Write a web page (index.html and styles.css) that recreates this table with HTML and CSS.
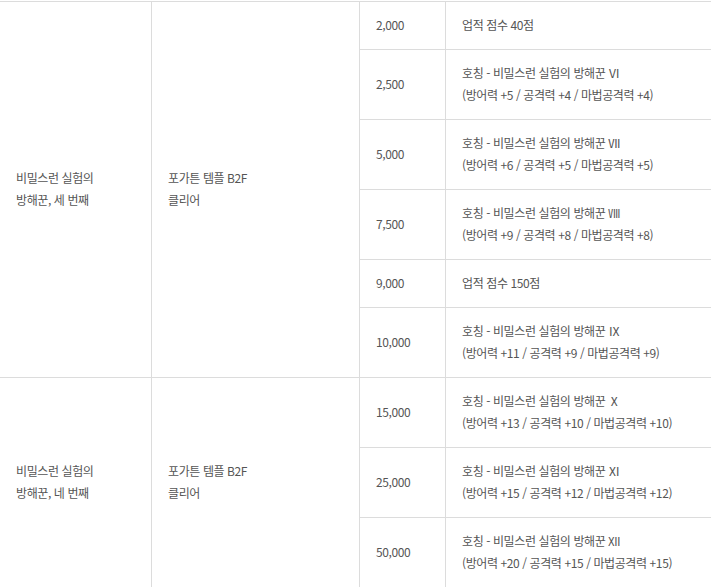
FILE: index.html
```html
<!DOCTYPE html>
<html lang="ko">
<head>
<meta charset="utf-8">
<title>비밀스런 실험의 방해꾼</title>
<link rel="stylesheet" href="styles.css">
</head>
<body>
<table class="reward-table">
  <colgroup>
    <col class="c-name">
    <col class="c-cond">
    <col class="c-score">
    <col class="c-reward">
  </colgroup>
  <tbody>
    <tr>
      <td rowspan="6">비밀스런 실험의<br>방해꾼, 세 번째</td>
      <td rowspan="6">포가튼 템플 B2F<br>클리어</td>
      <td>2,000</td>
      <td>업적 점수 40점</td>
    </tr>
    <tr>
      <td>2,500</td>
      <td>호칭 - 비밀스런 실험의 방해꾼 Ⅵ<br>(방어력 +5 / 공격력 +4 / 마법공격력 +4)</td>
    </tr>
    <tr>
      <td>5,000</td>
      <td>호칭 - 비밀스런 실험의 방해꾼 Ⅶ<br>(방어력 +6 / 공격력 +5 / 마법공격력 +5)</td>
    </tr>
    <tr>
      <td>7,500</td>
      <td>호칭 - 비밀스런 실험의 방해꾼 Ⅷ<br>(방어력 +9 / 공격력 +8 / 마법공격력 +8)</td>
    </tr>
    <tr>
      <td>9,000</td>
      <td>업적 점수 150점</td>
    </tr>
    <tr>
      <td>10,000</td>
      <td>호칭 - 비밀스런 실험의 방해꾼 Ⅸ<br>(방어력 +11 / 공격력 +9 / 마법공격력 +9)</td>
    </tr>
    <tr>
      <td rowspan="3">비밀스런 실험의<br>방해꾼, 네 번째</td>
      <td rowspan="3">포가튼 템플 B2F<br>클리어</td>
      <td>15,000</td>
      <td>호칭 - 비밀스런 실험의 방해꾼 Ⅹ<br>(방어력 +13 / 공격력 +10 / 마법공격력 +10)</td>
    </tr>
    <tr>
      <td>25,000</td>
      <td>호칭 - 비밀스런 실험의 방해꾼 Ⅺ<br>(방어력 +15 / 공격력 +12 / 마법공격력 +12)</td>
    </tr>
    <tr>
      <td>50,000</td>
      <td>호칭 - 비밀스런 실험의 방해꾼 Ⅻ<br>(방어력 +20 / 공격력 +15 / 마법공격력 +15)</td>
    </tr>
  </tbody>
</table>
</body>
</html>
```
FILE: styles.css
```css
html, body {
  margin: 0;
  padding: 0;
  overflow: hidden;
  background: #fff;
}
body {
  padding-top: 1px;
  font-family: "Noto Sans CJK KR", "Noto Sans", sans-serif;
  font-size: 12px;
  color: #555;
}
.reward-table {
  border-collapse: collapse;
  table-layout: fixed;
  width: 740px;
  margin-left: -1px;
}
.c-name { width: 152px; }
.c-cond { width: 208px; }
.c-score { width: 86px; }
.c-reward { width: 294px; }
.reward-table td {
  border: 1px solid #dcdcdc;
  padding: 12px 16px 13px;
  line-height: 22px;
  vertical-align: middle;
  text-align: left;
  white-space: nowrap;
  letter-spacing: -0.4px;
}
```
